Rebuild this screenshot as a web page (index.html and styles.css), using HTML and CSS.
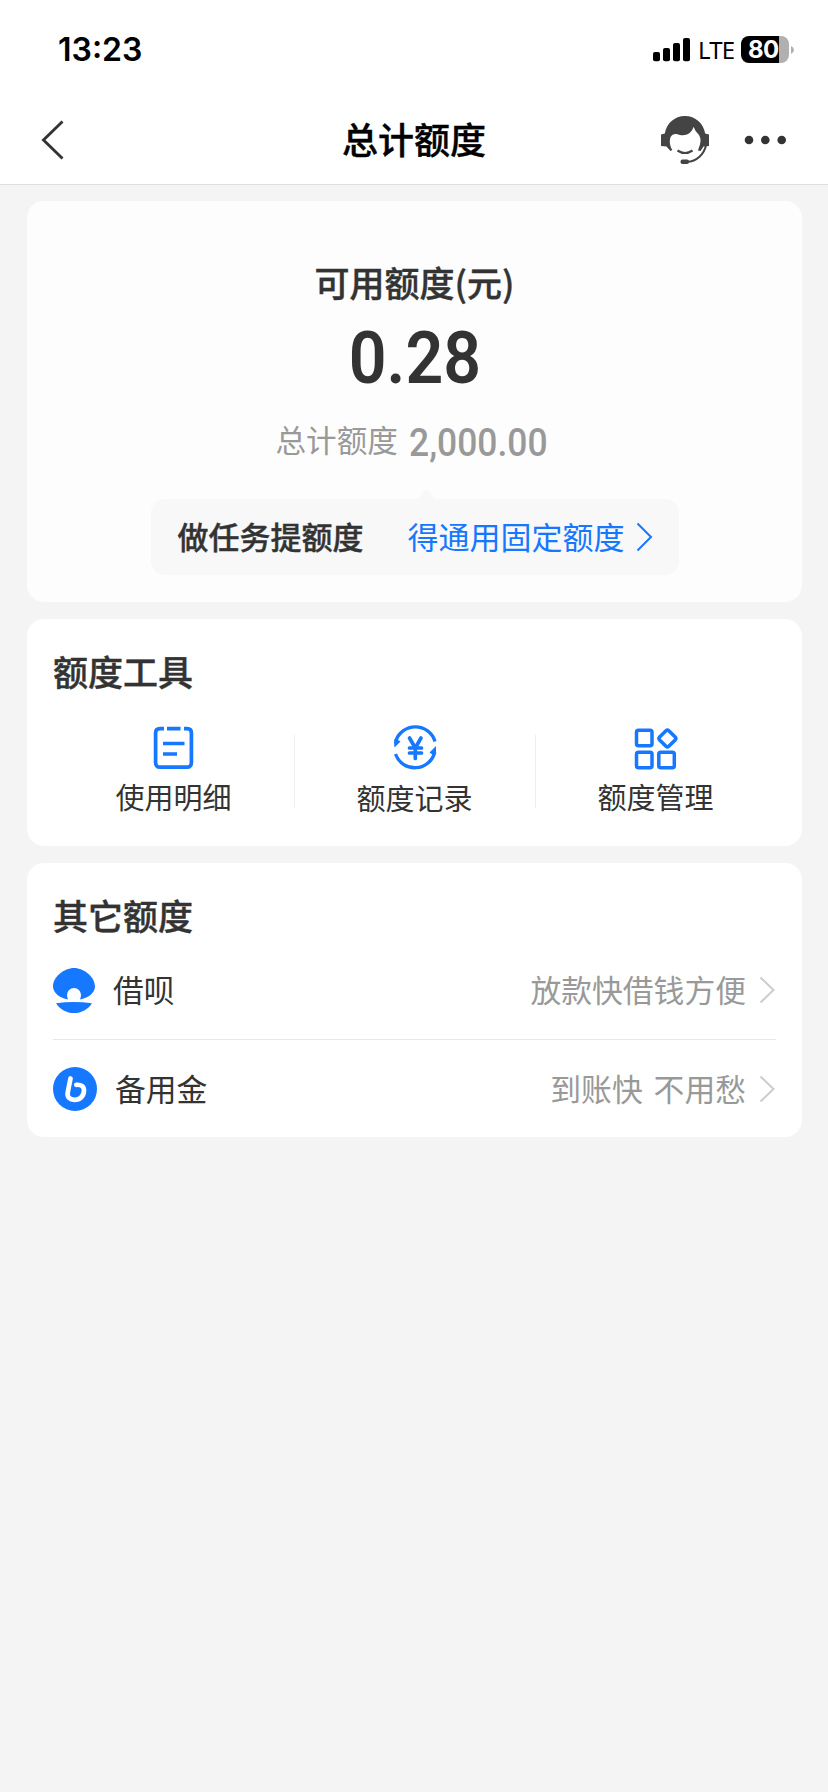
FILE: index.html
```html
<!DOCTYPE html>
<html lang="zh-CN">
<head>
<meta charset="utf-8">
<title>总计额度</title>
<link rel="stylesheet" href="styles.css">
</head>
<body>
<header class="header">
  <div class="status">
    <span class="time">13:23</span>
    <div class="status-right">
      <svg class="signal" width="38" height="24" viewBox="0 0 38 24"><rect x="0" y="14" width="7" height="9.300" rx="2"/><rect x="10" y="10" width="7" height="13.300" rx="2"/><rect x="20" y="5" width="7" height="18.300" rx="2"/><rect x="30" y="0" width="7" height="23.300" rx="2"/></svg>
      <span class="lte">LTE</span>
      <div class="battery"><span class="battery-level">80</span></div>
      <svg class="battery-tip" width="3" height="8" viewBox="0 0 3 8"><path d="M0 0Q3 1.500 3 4T0 8Z" fill="#b0b0b0"/></svg>
    </div>
  </div>
  <nav class="nav">
    <svg class="back" width="24" height="40" viewBox="0 0 24 40"><path d="M22.500 1.500 3.500 20 22.500 38.500" fill="none" stroke="#333" stroke-width="2.900"/></svg>
    <h1 class="title">总计额度</h1>
    <div class="nav-actions">
      <svg width="48" height="48" viewBox="0 0 48 48">
        <path fill="#444" d="M24 0C13.500 0 5.500 7.500 3.800 17.500L0 18.500V30L5.500 30.500L9.500 35L11.300 34C8.500 29 8.300 25 9.600 21Q11.500 17.500 15.500 18C19 19 22 19.800 25 18.800C29.500 17.500 31.500 14 32.600 10.800Q34 15 37 17.800Q40 21 39.400 26C39 30 37.500 32 37 34.500L39.500 35L42.500 30.500L48 30V18.500L44.200 17.500C42.500 7.500 34.500 0 24 0Z"/>
        <path d="M16.500 34.500Q24 39.500 31.500 34.500" fill="none" stroke="#444" stroke-width="2.200"/>
        <path d="M45 29.500C43 38 36 45.500 26 45.800" fill="none" stroke="#444" stroke-width="2"/>
        <rect x="19.500" y="43.500" width="8.500" height="4.500" rx="2" fill="#444"/>
      </svg>
      <svg class="more" width="44" height="10" viewBox="0 0 44 10"><g fill="#333"><circle cx="5" cy="5" r="4.300"/><circle cx="21.300" cy="5" r="4.300"/><circle cx="37.700" cy="5" r="4.300"/></g></svg>
    </div>
  </nav>
</header>
<main class="content">
  <section class="card summary">
    <h2 class="summary-title">可用额度(元)</h2>
    <div class="amount"><span class="din">0.28</span></div>
    <div class="total"><span class="total-label">总计额度</span><span class="total-number din">2,000.00</span></div>
    <a class="task">
      <svg class="caret" width="20" height="11" viewBox="0 0 20 11"><path d="M0 11Q2 10 4 7L8 1.800Q10-.5 12 1.800L16 7Q18 10 20 11Z" fill="#f8f8f8"/></svg>
      <span class="task-name">做任务提额度</span>
      <span class="task-link">得通用固定额度</span>
      <svg width="17" height="30" viewBox="0 0 17 30"><path d="M1.500 1.500 15 15 1.500 28.500" fill="none" stroke="#1677ff" stroke-width="2"/></svg>
    </a>
  </section>
  <section class="card tools">
    <h2 class="card-title">额度工具</h2>
    <div class="tool-grid">
      <div class="tool">
        <svg width="48" height="48" viewBox="0 0 48 48"><g fill="none" stroke="#1677ff" stroke-width="3.700"><path d="M14 5.700H10Q5.600 5.700 5.600 10V39.500Q5.600 44.200 10 44.200H37Q41.400 44.200 41.400 39.500V10Q41.400 5.700 37 5.700H34M17 5.700H30.500M13 20.500H34.500M13 31H27"/></g></svg>
        <span>使用明细</span>
      </div>
      <div class="tool">
        <svg width="48" height="48" viewBox="0 0 48 48"><g fill="none" stroke="#1677ff" stroke-width="3.300"><path d="M4.700 18.500A20.500 20.500 0 0 1 44 18.500M4.500 31A20.500 20.500 0 0 0 43.800 29"/><path stroke-width="3.700" stroke-linecap="round" d="M18.500 15 24.300 25 30 15M24.300 25V35.500M18.500 25H30.500M18.500 30H30.500"/></g><path fill="#1677ff" d="M3 19.500 3.500 16 7 17 9.500 18.500 3.500 24.500ZM45 23V31L42 32 38.500 29.500Z"/></svg>
        <span class="label-lower">额度记录</span>
      </div>
      <div class="tool">
        <svg width="48" height="48" viewBox="0 0 48 48"><g fill="none" stroke="#1677ff" stroke-width="3.500"><rect x="4.500" y="7.200" width="15.500" height="15.500" rx="2"/><rect x="4.500" y="29.200" width="15.500" height="15.500" rx="2"/><rect x="26.800" y="29.200" width="15.500" height="15.500" rx="2"/><rect x="28.900" y="9" width="13" height="13" rx="2" transform="rotate(45 35.400 15.500)"/></g></svg>
        <span>额度管理</span>
      </div>
    </div>
  </section>
  <section class="card others">
    <h2 class="card-title">其它额度</h2>
    <div class="row">
      <svg class="brand" width="42" height="46" viewBox="0 0 42 46"><g fill="#1677ff"><path d="M21 0C31 0 42 9 42 18.500C42 25 35 30 27 31.500Q28 29.500 28 27A7 7 0 0 0 14 27Q14 29.500 15 31.500C7 30 0 25 0 18.500C0 9 11 0 21 0Z"/><path d="M3 35.200Q21 32.800 39 35.200C35 41.500 28.500 45 21 45S7 41.500 3 35.200Z"/></g></svg>
      <span class="row-name">借呗</span>
      <span class="row-note">放款快借钱方便</span>
      <svg class="arrow" width="17" height="28" viewBox="0 0 17 28"><path d="M1.500 1.500 14.500 14 1.500 26.500" fill="none" stroke="#ccc" stroke-width="2"/></svg>
    </div>
    <div class="row">
      <svg width="44" height="44" viewBox="0 0 44 44"><circle cx="22" cy="22" r="22" fill="#1677ff"/><path d="M17.500 11.500 14.800 25C13.700 30.500 17 32.800 21.500 32.800C27 32.800 31 29 31 23.500C31 19.500 28 17.300 23.300 17.800" fill="none" stroke="#fff" stroke-width="4.700" stroke-linecap="round" stroke-linejoin="round"/></svg>
      <span class="row-name">备用金</span>
      <span class="row-note">到账快 不用愁</span>
      <svg class="arrow" width="17" height="28" viewBox="0 0 17 28"><path d="M1.500 1.500 14.500 14 1.500 26.500" fill="none" stroke="#ccc" stroke-width="2"/></svg>
    </div>
  </section>
</main>
</body>
</html>
```
FILE: styles.css
```css
* { box-sizing: border-box; }
body {
  margin: 0;
  min-height: 1792px;
  background: #f4f4f4;
  color: #333;
  font-family: "Noto Sans CJK SC", sans-serif;
}
svg { display: block; flex: none; }
h1, h2 { margin: 0; font-weight: 500; -webkit-text-stroke: .4px currentColor; }
.header { height: 185px; background: #fff; border-bottom: 1px solid #dedede; }
.status { height: 99px; padding: 0 34px 0 58px; display: flex; justify-content: space-between; align-items: center; }
.time { font: 600 32px/40px Inter, sans-serif; color: #000; }
.status-right { display: flex; align-items: center; }
.lte { margin-left: 7px; width: 43px; font: 400 24px/30px "Noto Sans", sans-serif; letter-spacing: -.8px; color: #000; }
.battery { width: 48px; height: 27px; border-radius: 8px; background: linear-gradient(90deg, #000 38px, #b0b0b0 38px); }
.battery-level { display: block; padding-left: 7px; font: 700 24px/27px Inter, sans-serif; letter-spacing: -.5px; color: #fff; }
.battery-tip { margin-left: 2px; }
.nav { height: 82px; padding: 0 40px 0 40px; display: grid; grid-template-columns: 168px 1fr 168px; align-items: center; }
.title { padding-bottom: 4px; text-align: center; font-size: 36px; line-height: 50px; color: #000; }
.nav-actions { display: flex; align-items: center; justify-content: flex-end; gap: 35px; }
.content { padding: 16px 26px 0 27px; display: flex; flex-direction: column; gap: 17px; }
.card { border-radius: 17px; background: #fff; }
.summary { height: 401px; padding-top: 56px; background: #fdfdfd; display: flex; flex-direction: column; align-items: center; }
.summary-title { font-size: 35px; line-height: 50px; }
.amount { height: 101px; font: 600 72px/103px Roboto, sans-serif; }
.din { display: inline-block; transform: scaleX(.92); }
.total { height: 66px; display: flex; align-items: center; color: #999; font-size: 30.600px; }
.total-label { padding-bottom: 4px; }
.total-number { margin-left: 5px; padding-top: 3px; font: 500 38.500px/66px Roboto, sans-serif; }
.task { position: relative; width: 528px; height: 76px; margin-top: 25px; padding: 0 26px 0 27px; border-radius: 14px; background: #f8f8f8; display: flex; align-items: center; font-size: 31px; }
.caret { position: absolute; left: 265px; top: -10px; }
.task-name { padding-bottom: 4px; font-weight: 500; -webkit-text-stroke: .4px currentColor; }
.task-link { padding-bottom: 4px; margin-left: auto; margin-right: 11px; color: #1677ff; }
.card-title { padding-left: 26px; font-size: 35px; line-height: 50px; }
.tools { height: 227px; padding-top: 27px; }
.tool-grid { padding: 27px 26px 0; display: grid; grid-template-columns: repeat(3, 241px); }
.tool { height: 96px; display: flex; flex-direction: column; align-items: center; gap: 4px; font-size: 29px; line-height: 42px; }
.tool + .tool { background: linear-gradient(#eee, #eee) left 12px / 1px 73px no-repeat; }
.label-lower { padding-top: 1px; }
.others { height: 274px; padding-top: 27px; }
.row { height: 99px; margin: 0 26px; display: flex; align-items: center; font-size: 30.800px; }
.row + .row { border-top: 1px solid #e8e8e8; }
.brand { margin-top: 2px; }
.row-name { margin-left: 18px; padding-bottom: 3px; }
.row-note { margin-left: auto; margin-right: 13px; padding-bottom: 3px; color: #999; word-spacing: 4px; }
.row + .row .row-name, .row + .row .row-note { padding-bottom: 4px; }
```
